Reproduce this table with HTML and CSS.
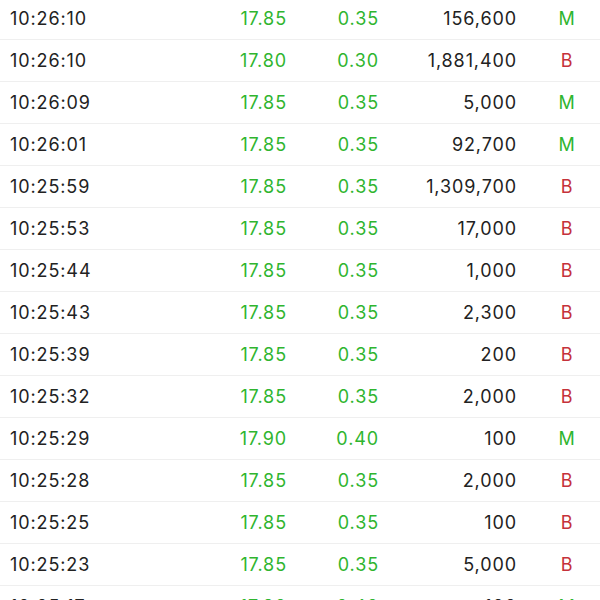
FILE: index.html
```html
<!DOCTYPE html>
<html>
<head>
<meta charset="utf-8">
<link rel="stylesheet" href="styles.css">
</head>
<body>
<div class="list">
  <div class="row"><span class="time">10:26:10</span><span class="price up">17.85</span><span class="chg up">0.35</span><span class="vol">156,600</span><span class="side m">M</span></div>
  <div class="row"><span class="time">10:26:10</span><span class="price up">17.80</span><span class="chg up">0.30</span><span class="vol">1,881,400</span><span class="side b">B</span></div>
  <div class="row"><span class="time">10:26:09</span><span class="price up">17.85</span><span class="chg up">0.35</span><span class="vol">5,000</span><span class="side m">M</span></div>
  <div class="row"><span class="time">10:26:01</span><span class="price up">17.85</span><span class="chg up">0.35</span><span class="vol">92,700</span><span class="side m">M</span></div>
  <div class="row"><span class="time">10:25:59</span><span class="price up">17.85</span><span class="chg up">0.35</span><span class="vol">1,309,700</span><span class="side b">B</span></div>
  <div class="row"><span class="time">10:25:53</span><span class="price up">17.85</span><span class="chg up">0.35</span><span class="vol">17,000</span><span class="side b">B</span></div>
  <div class="row"><span class="time">10:25:44</span><span class="price up">17.85</span><span class="chg up">0.35</span><span class="vol">1,000</span><span class="side b">B</span></div>
  <div class="row"><span class="time">10:25:43</span><span class="price up">17.85</span><span class="chg up">0.35</span><span class="vol">2,300</span><span class="side b">B</span></div>
  <div class="row"><span class="time">10:25:39</span><span class="price up">17.85</span><span class="chg up">0.35</span><span class="vol">200</span><span class="side b">B</span></div>
  <div class="row"><span class="time">10:25:32</span><span class="price up">17.85</span><span class="chg up">0.35</span><span class="vol">2,000</span><span class="side b">B</span></div>
  <div class="row"><span class="time">10:25:29</span><span class="price up">17.90</span><span class="chg up">0.40</span><span class="vol">100</span><span class="side m">M</span></div>
  <div class="row"><span class="time">10:25:28</span><span class="price up">17.85</span><span class="chg up">0.35</span><span class="vol">2,000</span><span class="side b">B</span></div>
  <div class="row"><span class="time">10:25:25</span><span class="price up">17.85</span><span class="chg up">0.35</span><span class="vol">100</span><span class="side b">B</span></div>
  <div class="row"><span class="time">10:25:23</span><span class="price up">17.85</span><span class="chg up">0.35</span><span class="vol">5,000</span><span class="side b">B</span></div>
  <div class="row"><span class="time">10:25:17</span><span class="price up">17.90</span><span class="chg up">0.40</span><span class="vol">100</span><span class="side m">M</span></div>
</div>
</body>
</html>
```
FILE: styles.css
```css
html, body {
  margin: 0;
  padding: 0;
  background: #ffffff;
}
body {
  font-family: Inter, Roboto, "Liberation Sans", sans-serif;
  font-size: 18px;
  letter-spacing: 0.9px;
  color: #222222;
  overflow: hidden;
  height: 600px;
}
.list {
  margin-top: -2px;
}
.row {
  display: grid;
  grid-template-columns: 200px 86px 92px 138px 1fr;
  align-items: center;
  height: 41px;
  border-bottom: 1px solid #efefef;
}
.time {
  padding-left: 10px;
}
.price, .chg, .vol {
  text-align: right;
  margin-right: -1px;
}
.up { color: #2fb52f; }
.side {
  text-align: center;
  padding-left: 18px;
}
.side.m { color: #2fb52f; }
.side.b { color: #c5323a; }
```
